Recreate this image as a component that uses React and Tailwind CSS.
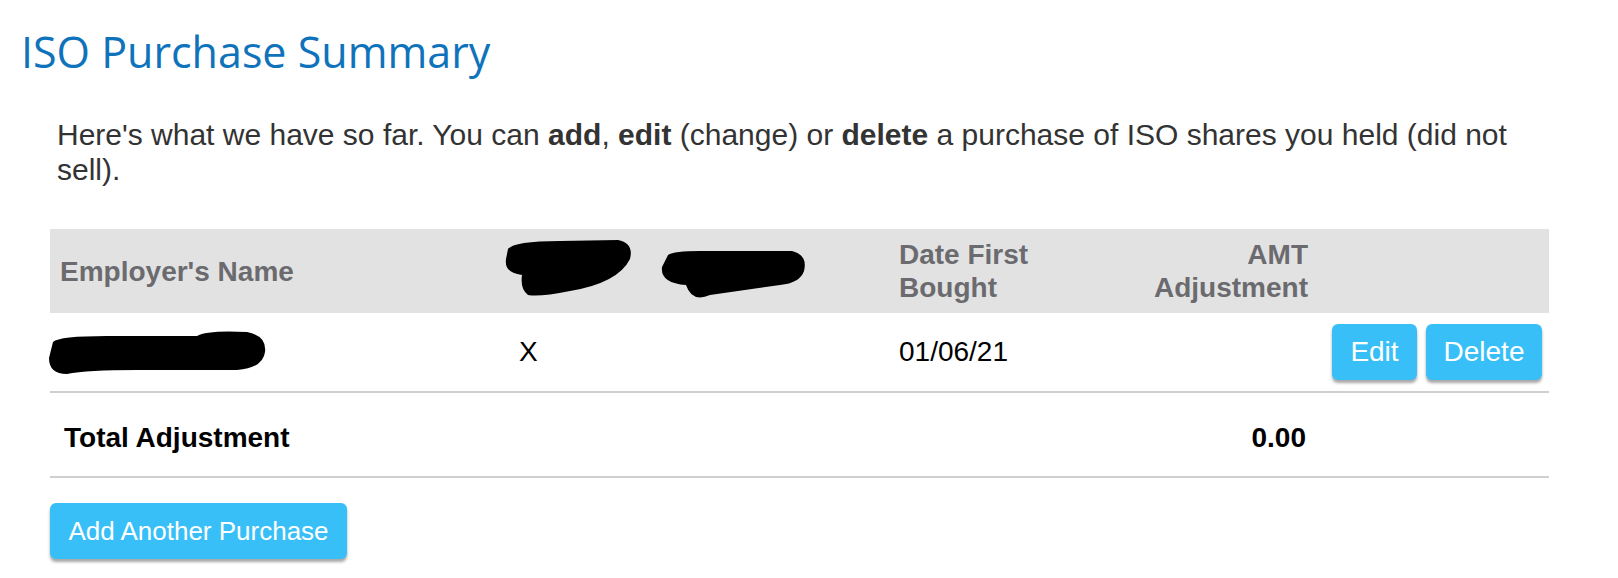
import React from 'react';

const SANS = '"Liberation Sans", Arial, sans-serif';
const TITLE = '"Open Sans", "Noto Sans", sans-serif';

function Blue({ children, className = '' }) {
  return (
    <button
      className={`rounded-[6px] bg-[#38bff8] text-white leading-none shadow-[0_3px_3px_rgba(0,0,0,0.35)] ${className}`}
      style={{ fontFamily: SANS }}
    >
      {children}
    </button>
  );
}

// redaction marks as they appear in the picture
function HeaderBlot() {
  return (
    <svg width="310" height="64" viewBox="0 0 310 64" className="ml-[-19px] block">
      <path d="M8 10 Q14 2 60 2 L118 1 Q134 4 130 20 Q118 44 70 52 Q40 58 28 56 Q20 50 22 36 Q4 34 6 20 Z" fill="#000" />
      <path d="M168 16 Q174 12 200 12 L292 12 Q308 16 304 32 Q300 44 280 46 L210 56 Q192 64 186 46 Q160 44 162 28 Z" fill="#000" />
    </svg>
  );
}

function RowBlot() {
  return (
    <svg width="222" height="44" viewBox="0 0 222 44" className="ml-[-13px] block">
      <path d="M6 12 Q12 6 60 6 L150 6 Q160 0 200 2 Q220 6 218 22 Q216 38 190 40 L90 40 Q40 40 20 44 Q2 44 2 28 Z" fill="#000" />
    </svg>
  );
}

export default function App() {
  return (
    <div className="min-h-[578px] bg-white pl-[21px] pr-[69px]" style={{ fontFamily: SANS }}>
      <h1
        className="pt-[24px] text-[43px] leading-[56px] text-[#0f73bb]"
        style={{ fontFamily: TITLE }}
      >
        ISO Purchase Summary
      </h1>

      <p className="mt-[37px] pl-[36px] pr-[20px] text-[30px] leading-[35px] text-[#333]">
        Here's what we have so far. You can <b>add</b>, <b>edit</b> (change) or <b>delete</b> a purchase of
        ISO shares you held (did not sell).
      </p>

      <div className="mt-[42px] ml-[29px] w-[1499px]">
        {/* header */}
        <div className="grid h-[84px] grid-cols-[459px_380px_211px_218px_1fr] items-center bg-[#e2e2e2] text-[28px] font-bold leading-[33px] text-[#6b6b6f]">
          <div className="pl-[10px]">Employer's Name</div>
          <div className="pl-[10px]">
            <HeaderBlot />
          </div>
          <div className="pl-[10px]">Date First Bought</div>
          <div className="pr-[10px] text-right">AMT Adjustment</div>
          <div />
        </div>

        {/* purchase row */}
        <div className="grid h-[80px] grid-cols-[459px_380px_211px_218px_1fr] items-center border-b-2 border-[#cfcfcf] text-[28px] text-black">
          <div className="pl-[10px]">
            <RowBlot />
          </div>
          <div className="pl-[10px]">X</div>
          <div className="pl-[10px]">01/06/21</div>
          <div />
          <div className="flex justify-end gap-[9px] pr-[7px]">
            <Blue className="h-[56px] w-[85px] text-[28px]">Edit</Blue>
            <Blue className="h-[56px] w-[116px] text-[28px]">Delete</Blue>
          </div>
        </div>

        {/* total */}
        <div className="grid h-[85px] grid-cols-[459px_380px_211px_218px_1fr] items-center border-b-2 border-[#cfcfcf] pt-[6px] text-[28px] font-bold text-black">
          <div className="pl-[14px]">Total Adjustment</div>
          <div />
          <div />
          <div className="pr-[12px] text-right">0.00</div>
          <div />
        </div>

        <Blue className="mt-[25px] h-[56px] w-[297px] text-[26px]">Add Another Purchase</Blue>
      </div>
    </div>
  );
}
